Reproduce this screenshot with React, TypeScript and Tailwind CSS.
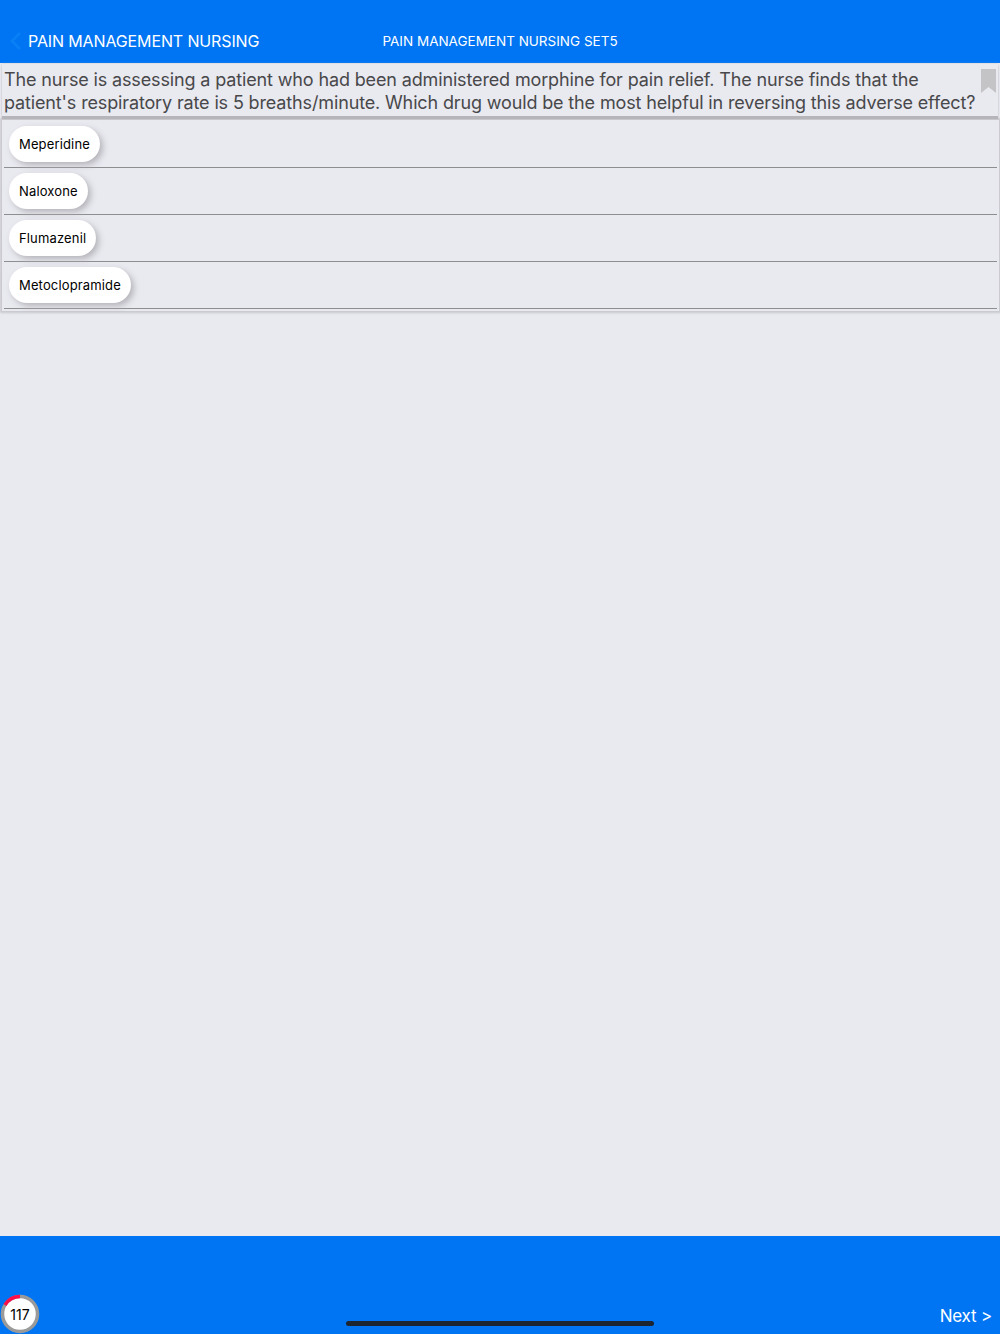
const ANSWERS = ["Meperidine", "Naloxone", "Flumazenil", "Metoclopramide"];

function Timer() {
  return (
    <div className="absolute bottom-0 left-0 h-[40px] w-[40px] overflow-hidden">
      <svg width="40" height="40" viewBox="0 0 40 40" className="absolute left-0 top-0">
        <circle cx="20" cy="20" r="17.5" fill="#fff" stroke="#9a9a9a" strokeWidth="3.5" />
        <path d="M20 2.5A17.5 17.5 0 0 0 5 11" fill="none" stroke="#fb0f4a" strokeWidth="3.5" />
      </svg>
      <span className="absolute left-0 top-[11px] w-[40px] text-center text-[14px] leading-[20px] text-black">117</span>
    </div>
  );
}

export default function App() {
  return (
    <div className="flex h-[1334px] w-[1000px] flex-col overflow-hidden bg-[#e9e9f0] font-['Inter','Liberation_Sans',sans-serif]">
      <header className="relative flex h-[63px] shrink-0 items-end bg-[#0075f3] pb-[12px] text-white">
        <svg width="14" height="20" viewBox="0 0 14 20" className="absolute left-[9px] top-[31px]">
          <path d="M11 2L3 10l8 8" fill="none" stroke="#0a80f5" strokeWidth="2.5" />
        </svg>
        <span className="ml-[28px] text-[16px] leading-[20px] tracking-[-0.13px]">PAIN MANAGEMENT NURSING</span>
        <span className="absolute left-0 right-0 top-[32px] text-center text-[13.5px] leading-[18px]">
          PAIN MANAGEMENT NURSING SET5
        </span>
      </header>

      <div className="relative mx-[2px] mt-[1px] h-[52px] shrink-0 bg-[#e9e9f0] pl-[2px] pt-[4px] text-[18px] leading-[23px] tracking-[-0.14px] text-[#48484a] shadow-[0_3px_1px_0_#b5b5ba,0_0_2px_0_#c8c8ce]">
        <p className="whitespace-nowrap">
          The nurse is assessing a patient who had been administered morphine for pain relief. The nurse finds that the
        </p>
        <p className="whitespace-nowrap">
          patient's respiratory rate is 5 breaths/minute. Which drug would be the most helpful in reversing this adverse effect?
        </p>
        <svg width="15" height="24" viewBox="0 0 15 24" className="absolute right-[2px] top-[5px]">
          <path d="M0 0h15v24l-7.5-6L0 24z" fill="#c4c4c6" />
        </svg>
      </div>

      <div className="ml-[2px] mr-[1px] mt-[4px] shrink-0 px-[2px] pb-[2px] pt-[1px] shadow-[0_0_2px_2px_#c8c8ce]">
        {ANSWERS.map((a) => (
          <div key={a} className="flex h-[47px] items-center border-b border-[#8e8e90] pl-[5px]">
            <button
              type="button"
              className="h-[36px] rounded-[18px] bg-white px-[10px] pt-[2px] text-[13px] tracking-[0.15px] text-black shadow-[3px_3px_6px_#b4b4ba]"
            >
              {a}
            </button>
          </div>
        ))}
      </div>

      <div className="flex-1" />

      <footer className="relative h-[98px] shrink-0 bg-[#0075f3]">
        <Timer />
        <div className="absolute bottom-[8px] left-[346px] h-[5px] w-[308px] rounded-full bg-[#1c2530]" />
        <span className="absolute bottom-[7px] right-[8px] text-[17px] leading-[22px] tracking-[-0.2px] text-white">{"Next >"}</span>
      </footer>
    </div>
  );
}
